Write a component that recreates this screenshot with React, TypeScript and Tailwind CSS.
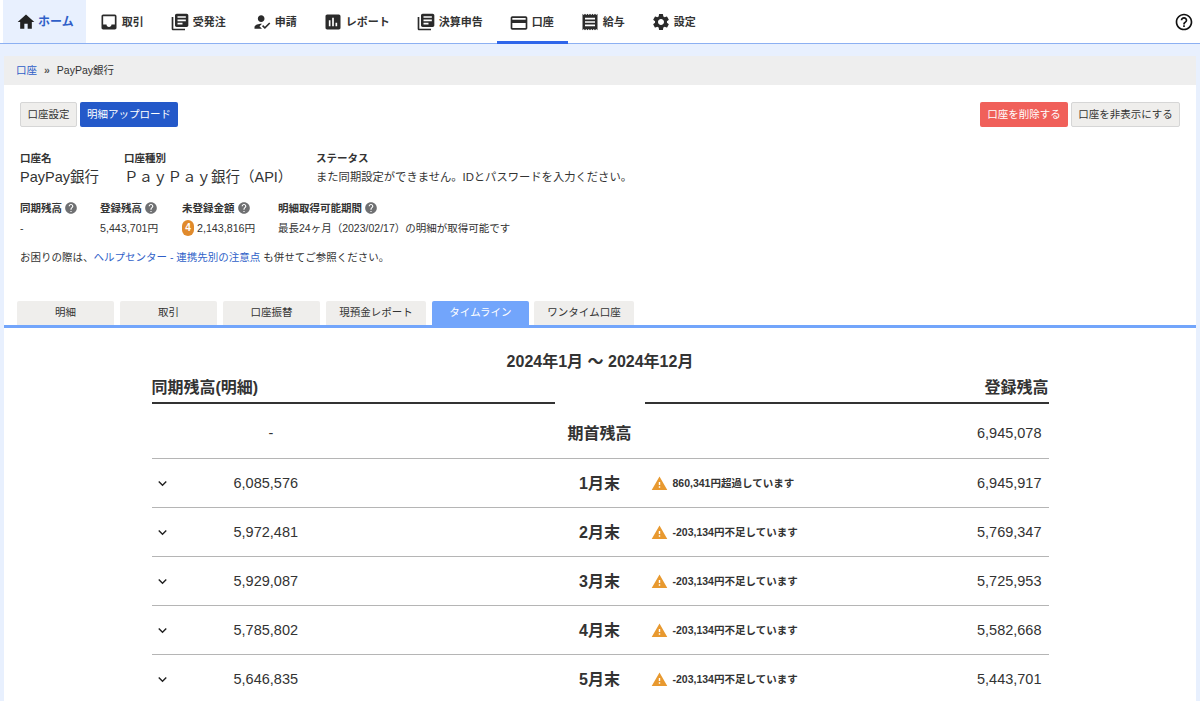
import type { IconType } from "react-icons";
import {
  MdAssessment,
  MdHelp,
  MdHelpOutline,
  MdHome,
  MdHowToReg,
  MdInbox,
  MdKeyboardArrowDown,
  MdLibraryBooks,
  MdOutlineCreditCard,
  MdReceipt,
  MdSettings,
  MdWarning,
} from "react-icons/md";

const navItems: { label: string; icon: IconType }[] = [
  { label: "取引", icon: MdInbox },
  { label: "受発注", icon: MdLibraryBooks },
  { label: "申請", icon: MdHowToReg },
  { label: "レポート", icon: MdAssessment },
  { label: "決算申告", icon: MdLibraryBooks },
  { label: "口座", icon: MdOutlineCreditCard },
  { label: "給与", icon: MdReceipt },
  { label: "設定", icon: MdSettings },
];

const tabs = ["明細", "取引", "口座振替", "現預金レポート", "タイムライン", "ワンタイム口座"];

const rows = [
  { month: "1月末", synced: "6,085,576", note: "860,341円超過しています", registered: "6,945,917" },
  { month: "2月末", synced: "5,972,481", note: "-203,134円不足しています", registered: "5,769,347" },
  { month: "3月末", synced: "5,929,087", note: "-203,134円不足しています", registered: "5,725,953" },
  { month: "4月末", synced: "5,785,802", note: "-203,134円不足しています", registered: "5,582,668" },
  { month: "5月末", synced: "5,646,835", note: "-203,134円不足しています", registered: "5,443,701" },
];

const Label = ({ text, help }: { text: string; help?: boolean }) => (
  <div className="flex h-[16px] items-center gap-[2px] text-[10.5px] font-bold leading-none text-[#333]">
    {text}
    {help && <MdHelp className="text-[14px] text-[#6f7072]" />}
  </div>
);

const App = () => {
  return (
    <div className="h-screen overflow-hidden bg-[#e8f0fe] font-['Liberation_Sans','Noto_Sans_CJK_JP',sans-serif] text-[#333]">
      <nav className="flex h-[44px] items-stretch border-b border-[#8cb0f2] bg-white pl-[3px]">
        <a className="mr-[1px] flex items-center gap-[2px] bg-[#e8f0fe] pl-[13px] pr-[12px] pt-[1px] text-[12px] font-bold text-[#2f5fc8]">
          <MdHome className="text-[20px] text-[#222]" />
          ホーム
        </a>
        {navItems.map((item) => {
          const Icon = item.icon;
          const active = item.label === "口座";
          return (
            <a
              key={item.label}
              className={
                active
                  ? "-mb-px flex items-center gap-[3px] border-b-[3px] border-[#2f66ea] pl-[12px] pr-[14px] pt-[4px] text-[11px] font-bold text-[#333]"
                  : "flex items-center gap-[3px] pl-[12px] pr-[14px] pt-[1px] text-[11px] font-bold text-[#333]"
              }
            >
              <Icon className="text-[20px] text-[#2b2b2b]" />
              {item.label}
            </a>
          );
        })}
        <div className="ml-auto flex items-center pr-[6px]">
          <MdHelpOutline className="text-[20px] text-[#111]" />
        </div>
      </nav>

      <main className="mx-[4px] mt-[12px] bg-white">
        <div className="flex h-[29px] items-center gap-[7px] bg-[#eeeeee] px-[12px] text-[10.5px]">
          <a className="text-[#2f5fc8]">口座</a>
          <span className="font-bold text-[#555]">»</span>
          <span>PayPay銀行</span>
        </div>

        <div className="px-[16px] pt-[17px]">
          <div className="flex justify-between">
            <div className="flex gap-[3px]">
              <button className="h-[25px] w-[57px] rounded-[2px] border border-[#d6d6d6] bg-[#efeeec] text-[10.5px] text-[#333]">
                口座設定
              </button>
              <button className="h-[25px] w-[98px] rounded-[2px] bg-[#2459c9] text-[10.5px] text-white">
                明細アップロード
              </button>
            </div>
            <div className="flex gap-[3px]">
              <button className="h-[25px] w-[88px] rounded-[2px] bg-[#f0605a] text-[10.5px] text-white">
                口座を削除する
              </button>
              <button className="h-[25px] w-[109px] rounded-[2px] border border-[#d6d6d6] bg-[#efeeec] text-[10.5px] text-[#333]">
                口座を非表示にする
              </button>
            </div>
          </div>

          <div className="mt-[23px] flex">
            <div className="w-[104px]">
              <Label text="口座名" />
              <div className="mt-[1px] text-[14.5px] leading-[20px]">PayPay銀行</div>
            </div>
            <div className="w-[192px]">
              <Label text="口座種別" />
              <div className="mt-[1px] text-[14.5px] leading-[20px]">ＰａｙＰａｙ銀行（API）</div>
            </div>
            <div>
              <Label text="ステータス" />
              <div className="mt-[1px] text-[11.3px] leading-[20px]">
                また同期設定ができません。IDとパスワードを入力ください。
              </div>
            </div>
          </div>

          <div className="mt-[13px] flex">
            <div className="w-[80px]">
              <Label text="同期残高" help />
              <div className="mt-[2px] text-[10.5px] leading-[20px]">-</div>
            </div>
            <div className="w-[82px]">
              <Label text="登録残高" help />
              <div className="mt-[2px] text-[10.7px] leading-[20px]">5,443,701円</div>
            </div>
            <div className="w-[96px]">
              <Label text="未登録金額" help />
              <div className="mt-[2px] flex items-center gap-[3px] text-[10.7px] leading-[20px]">
                <span className="flex h-[16px] w-[12px] items-center justify-center rounded-full bg-[#e08a2c] text-[10px] font-bold text-white">
                  4
                </span>
                2,143,816円
              </div>
            </div>
            <div>
              <Label text="明細取得可能期間" help />
              <div className="mt-[2px] text-[10.5px] leading-[20px]">最長24ヶ月（2023/02/17）の明細が取得可能です</div>
            </div>
          </div>

          <p className="mt-[9px] text-[10.5px] leading-[20px]">
            お困りの際は、<a className="text-[#2f5fc8]">ヘルプセンター - 連携先別の注意点</a> も併せてご参照ください。
          </p>
        </div>

        <div className="mt-[34px] flex gap-[6px] border-b-[3px] border-[#72a5fb] pl-[13px]">
          {tabs.map((tab) => (
            <div
              key={tab}
              className={
                tab === "タイムライン"
                  ? "flex h-[24px] w-[97px] items-center justify-center rounded-t-[2px] bg-[#72a5fb] text-[10.5px] text-white"
                  : tab === "ワンタイム口座"
                    ? "-ml-px flex h-[24px] w-[100px] items-center justify-center rounded-t-[2px] bg-[#efeeec] text-[10.5px]"
                    : tab === "現預金レポート"
                      ? "flex h-[24px] w-[100px] items-center justify-center rounded-t-[2px] bg-[#efeeec] text-[10.5px]"
                      : "flex h-[24px] w-[97px] items-center justify-center rounded-t-[2px] bg-[#efeeec] text-[10.5px]"
              }
            >
              {tab}
            </div>
          ))}
        </div>

        <section className="mx-auto w-[897px]">
          <h2 className="mt-[23px] text-center text-[16px] font-bold leading-[22px]">2024年1月 〜 2024年12月</h2>
          <div className="flex">
            <div className="w-[403px] border-b-[2px] border-[#333] pb-[3px] pt-[4px] text-[16px] font-bold leading-[22px]">
              同期残高(明細)
            </div>
            <div className="w-[90px]" />
            <div className="w-[404px] border-b-[2px] border-[#333] pb-[3px] pt-[4px] text-right text-[16px] font-bold leading-[22px]">
              登録残高
            </div>
          </div>
          <div className="flex h-[55px] items-center border-b border-[#b5b5b5] pt-[6px]">
            <div className="w-[403px] pl-[117px] text-[14.5px]">-</div>
            <div className="w-[90px] text-center text-[16px] font-bold">期首残高</div>
            <div className="w-[404px] pr-[7px] text-right text-[14.5px]">6,945,078</div>
          </div>
          {rows.map((row) => (
            <div key={row.month} className="flex h-[49px] items-center border-b border-[#b5b5b5] pt-[2px]">
              <div className="flex w-[403px] items-center text-[14.5px]">
                <div className="-mt-[2px] w-[82px] pl-[2px]">
                  <MdKeyboardArrowDown className="text-[17px] text-[#222]" />
                </div>
                {row.synced}
              </div>
              <div className="w-[90px] text-center text-[16px] font-bold">{row.month}</div>
              <div className="flex w-[404px] items-center pl-[6px] pr-[7px]">
                <MdWarning className="-mt-[2px] text-[17px] text-[#e8992f]" />
                <span className="ml-[5px] text-[10.5px] font-bold">{row.note}</span>
                <span className="ml-auto text-[14.5px]">{row.registered}</span>
              </div>
            </div>
          ))}
        </section>
      </main>
    </div>
  );
};

export default App;
